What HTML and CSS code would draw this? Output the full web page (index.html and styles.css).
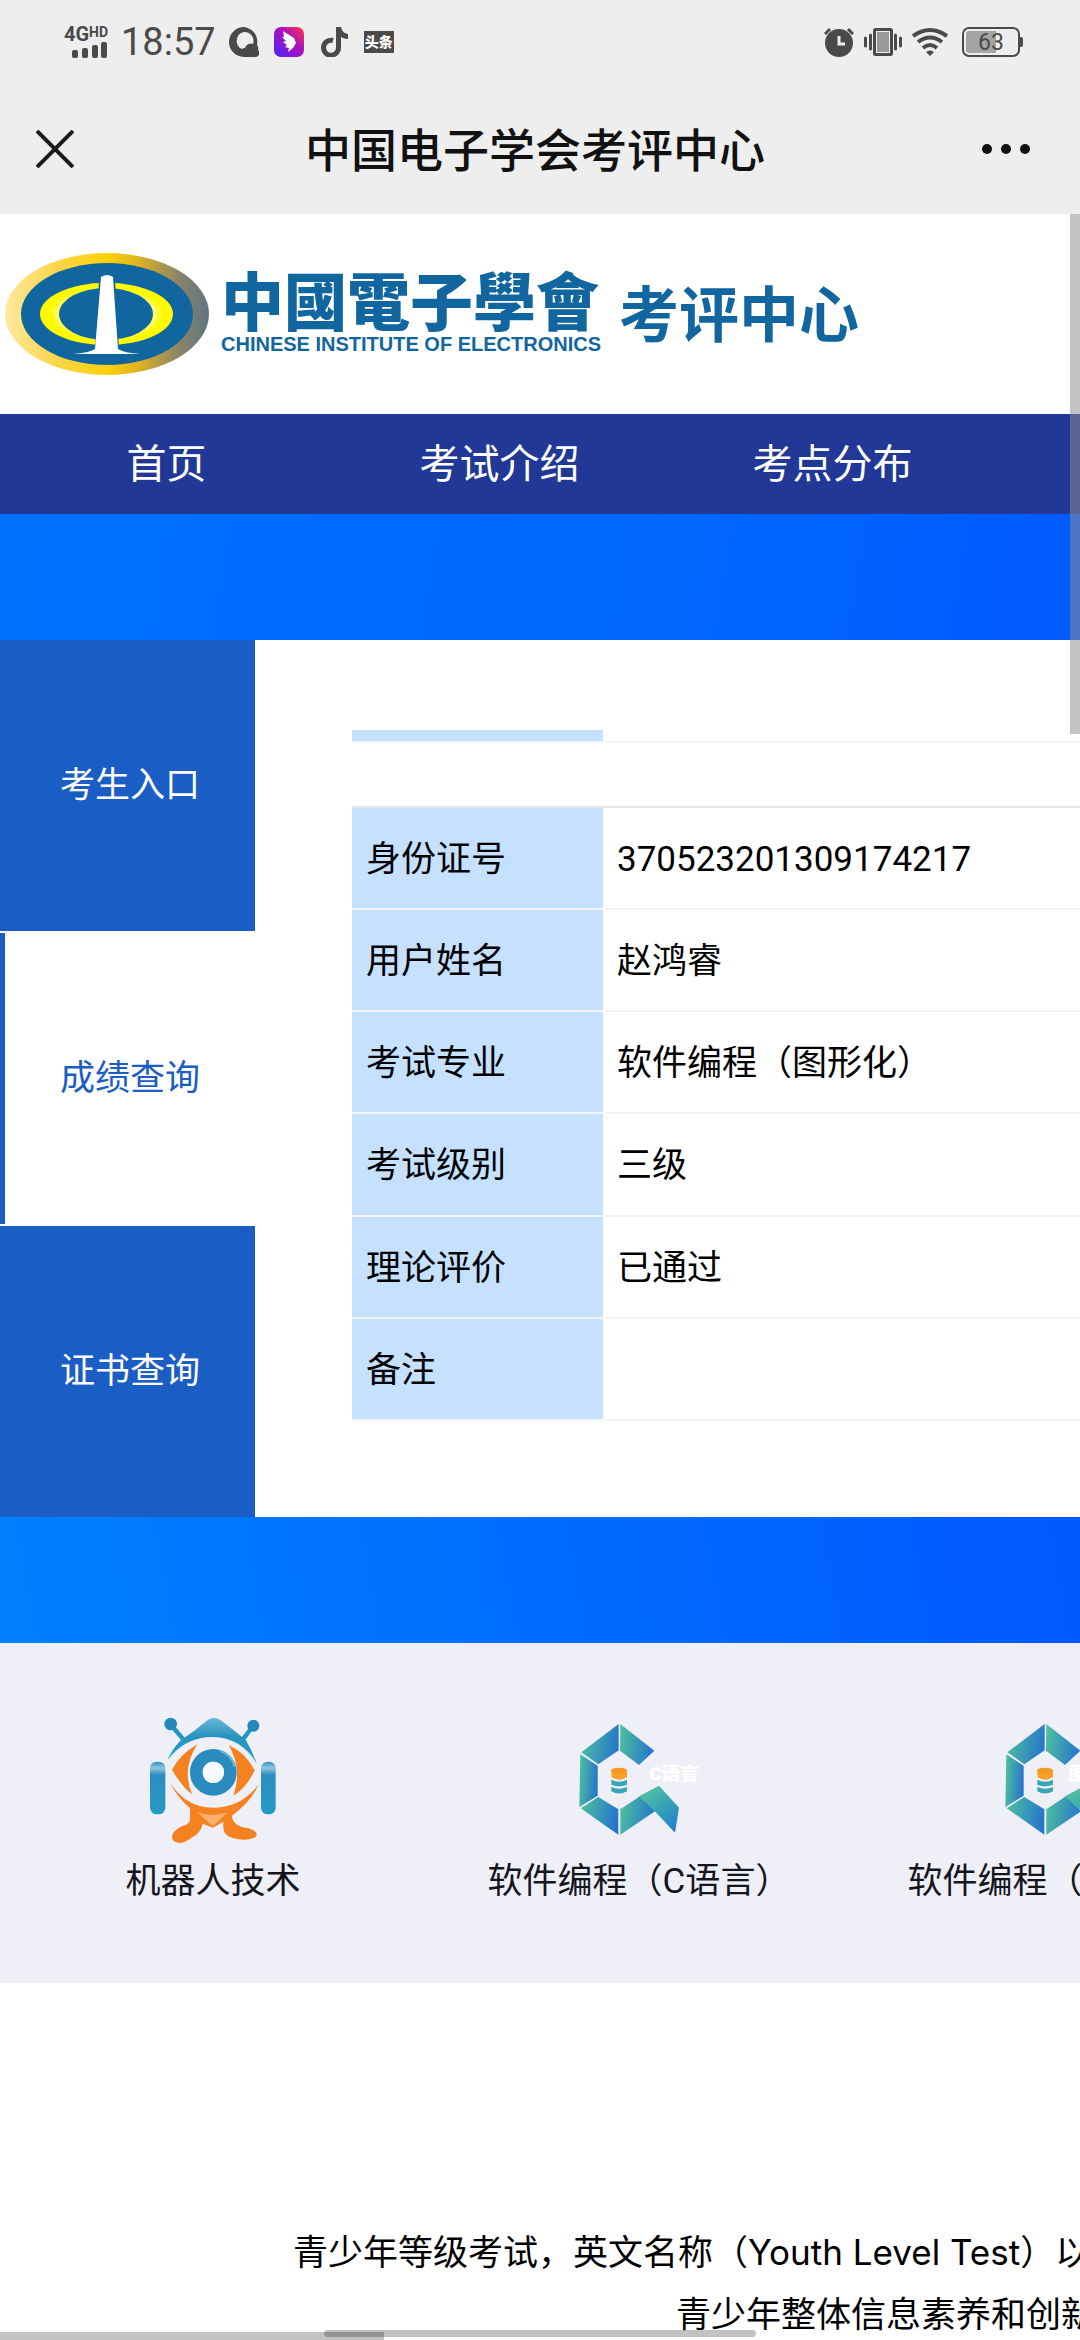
FILE: index.html
```html
<!DOCTYPE html>
<html lang="zh-CN">
<head>
    <meta charset="UTF-8">
    <meta name="viewport" content="width=device-width, initial-scale=1.0">
    <title>中国电子学会考评中心</title>
    <link rel="stylesheet" href="styles.css">
</head>
<body>
    <div class="screen">
        <div class="statusbar">
            <div class="status-left">
                <div class="signal">
                    <span class="net">4G<sup>HD</sup></span>
                    <svg width="36" height="16" viewBox="0 0 36 16" fill="#4a4a4a">
                        <rect x="0" y="8" width="6" height="8" rx="2"/>
                        <rect x="10" y="6" width="6" height="10" rx="2"/>
                        <rect x="20" y="3" width="6" height="13" rx="2"/>
                        <rect x="29" y="0" width="6" height="16" rx="2"/>
                    </svg>
                </div>
                <span class="time">18:57</span>
                <svg class="app" width="30" height="30" viewBox="0 0 30 30">
                    <path fill="#4a4a4a" fill-rule="evenodd" d="M15 0a15 15 0 1 0 0 30h11a4 4 0 0 0 3-7 5 5 0 0 0-1-5A15 15 0 0 0 15 0zM15 5a9 9 0 0 1 9 12 6 6 0 0 0-8 4 5 5 0 0 0-3 1A9 9 0 0 1 15 5z"/>
                </svg>
                <svg class="app" width="30" height="30" viewBox="0 0 30 30">
                    <defs>
                        <linearGradient id="bird" x1="0" y1="1" x2="1" y2="0">
                            <stop offset="0.1" stop-color="#5a22f0"/>
                            <stop offset="0.6" stop-color="#b010b8"/>
                            <stop offset="1" stop-color="#ff3a50"/>
                        </linearGradient>
                    </defs>
                    <rect width="30" height="30" rx="7" fill="url(#bird)"/>
                    <path fill="#fff" d="M9 4l11 7 2 5-3 5-5 4 1-4-4-1 2-2-4-3 3-1-4-4 2 0z"/>
                </svg>
                <svg class="app" width="30" height="30" viewBox="0 0 30 30">
                    <path fill="none" stroke="#4a4a4a" stroke-width="5" d="M14 13.500A7.500 7.500 0 1 0 19.500 21V1"/>
                    <path fill="#4a4a4a" d="M17 0h5q1 6 7 7v5q-5 0-8-3h-4z"/>
                </svg>
                <span class="toutiao">头条</span>
            </div>
            <div class="status-right">
                <svg width="30" height="30" viewBox="0 0 30 30">
                    <circle cx="15" cy="16" r="14" fill="#4a4a4a"/>
                    <path d="M1 7l5-5M29 7l-5-5" stroke="#4a4a4a" stroke-width="3"/>
                    <path d="M15 9v8h6" stroke="#eee" stroke-width="3" fill="none"/>
                </svg>
                <svg width="38" height="30" viewBox="0 0 38 30">
                    <rect x="10.500" y="2.500" width="17" height="25" rx="1" fill="#eee" stroke="#4a4a4a" stroke-width="3"/>
                    <rect x="13" y="5" width="12" height="20" fill="#999"/>
                    <path d="M1.500 11v8M6.500 8v14M31.500 8v14M36.500 11v8" stroke="#4a4a4a" stroke-width="3" stroke-linecap="round"/>
                </svg>
                <svg width="36" height="30" viewBox="0 0 36 30" fill="none" stroke="#4a4a4a" stroke-width="4">
                    <path d="M1 9q17-12 34 0M6 15q12-9 24 0M11 21q7-6 14 0"/>
                    <path d="M18 29l-4-4q4-3 8 0z" fill="#4a4a4a" stroke="none"/>
                </svg>
                <span class="battery">63</span>
            </div>
        </div>

        <div class="titlebar">
            <button class="close" type="button" aria-label="关闭">
                <svg width="38" height="38" viewBox="0 0 38 38">
                    <path d="M1 1l36 36M37 1L1 37" stroke="#1c1c1c" stroke-width="4"/>
                </svg>
            </button>
            <h1>中国电子学会考评中心</h1>
            <button class="more" type="button" aria-label="更多">
                <svg width="48" height="10" viewBox="0 0 48 10" fill="#111">
                    <circle cx="5" cy="5" r="5"/>
                    <circle cx="24" cy="5" r="5"/>
                    <circle cx="43" cy="5" r="5"/>
                </svg>
            </button>
        </div>

        <main class="webview">
            <header class="logo">
                <svg width="210" height="128" viewBox="0 0 210 128">
                    <defs>
                        <linearGradient id="ring">
                            <stop offset="0" stop-color="#ffe9a0"/>
                            <stop offset="0.25" stop-color="#fbd54a"/>
                            <stop offset="0.5" stop-color="#fcd209"/>
                            <stop offset="0.65" stop-color="#dfb420"/>
                            <stop offset="0.85" stop-color="#8a8568"/>
                            <stop offset="1" stop-color="#5f7480"/>
                        </linearGradient>
                        <radialGradient id="moon">
                            <stop offset="0.6" stop-color="#fffde0"/>
                            <stop offset="0.85" stop-color="#fffa00"/>
                        </radialGradient>
                    </defs>
                    <ellipse cx="107" cy="64" rx="102" ry="61" fill="url(#ring)"/>
                    <ellipse cx="107" cy="64" rx="86" ry="51" fill="#1166a0"/>
                    <path fill="url(#moon)" fill-rule="evenodd" d="M40 64a66 31 0 0 1 133 0a66 31 0 0 1-133 0zM59 64a47 26 0 0 0 94 0a47 26 0 0 0-94 0z"/>
                    <path fill="#1166a0" d="M99 30h16l4 70H95z"/>
                    <path fill="#fff" d="M101 27q6-4 12 0l5 72q6 4 22 5H73q16-1 22-5z"/>
                </svg>
                <div class="logo-name">
                    <span class="logo-cn" lang="zh-TW">中國電子學會</span>
                    <span class="logo-en">CHINESE INSTITUTE OF ELECTRONICS</span>
                </div>
                <span class="logo-center">考评中心</span>
            </header>

            <nav class="topnav">
                <a href="#">首页</a>
                <a href="#">考试介绍</a>
                <a href="#">考点分布</a>
            </nav>

            <section class="banner">
                <div class="panel">
                    <nav class="sidenav">
                        <a href="#">考生入口</a>
                        <a href="#" class="active">成绩查询</a>
                        <a href="#">证书查询</a>
                    </nav>
                    <div class="result">
                        <table class="result-prev">
                            <tr><th></th><td></td></tr>
                        </table>
                        <table class="result-table">
                            <tr><th>身份证号</th><td>370523201309174217</td></tr>
                            <tr><th>用户姓名</th><td>赵鸿睿</td></tr>
                            <tr><th>考试专业</th><td>软件编程（图形化）</td></tr>
                            <tr><th>考试级别</th><td>三级</td></tr>
                            <tr><th>理论评价</th><td>已通过</td></tr>
                            <tr><th>备注</th><td></td></tr>
                        </table>
                    </div>
                </div>
            </section>

            <section class="subjects">
                <a href="#" class="subject">
                    <svg width="128" height="128" viewBox="147 112 384 384">
                        <defs>
                            <linearGradient id="head" x1="0" y1="0" x2="0" y2="1">
                                <stop offset="0" stop-color="#6db9d8"/>
                                <stop offset="0.4" stop-color="#2893c0"/>
                                <stop offset="1" stop-color="#22a5c8"/>
                            </linearGradient>
                            <linearGradient id="arm" x1="0" y1="0" x2="0" y2="1">
                                <stop offset="0" stop-color="#2d8fc0"/>
                                <stop offset="0.12" stop-color="#8fc8e0"/>
                                <stop offset="0.25" stop-color="#2d8cc0"/>
                                <stop offset="1" stop-color="#259cc4"/>
                            </linearGradient>
                        </defs>
                        <path d="M211 133l42 50M460 138l-38 50" stroke="#2594bf" stroke-width="13"/>
                        <circle cx="212" cy="133" r="19" fill="#2688b8"/>
                        <circle cx="460" cy="138" r="18" fill="#2688b8"/>
                        <path fill="url(#head)" d="M202 242q15-34 38-58 42-28 82-62 20-15 40 0 38 28 76 60 18 30 32 70-45-78-132-80-84 0-136 70z"/>
                        <rect x="150" y="246" width="46" height="158" rx="20" fill="url(#arm)"/>
                        <rect x="483" y="246" width="44" height="158" rx="20" fill="url(#arm)"/>
                        <path fill="#f58220" d="M208 306q50 78 130 78 86 0 138-70-22 52-80 94 0 30 50 38 26 8 24 20-4 14-40 14-50-4-57-24-6-16-2-30l-33 18-30-12q-4 26-30 40-24 18-40 18-22-2-22-18 2-20 30-32 24-8 24-20v-34q-40-36-62-80z"/>
                        <path fill="#fbb070" d="M292 398q46 16 90 0-22 24-44 42-20-18-46-42z"/>
                        <path fill="#f58220" d="M292 194q-48 74-16 150-30-22-60-74 22-44 76-76zM386 196q52 24 78 76-24 52-64 76 28-80-14-152z"/>
                        <circle cx="340" cy="278" r="51" fill="none" stroke="#2a8bc0" stroke-width="38"/>
                        <path d="M360 214q36 10 44 48" fill="none" stroke="#70b6dc" stroke-width="6"/>
                        <circle cx="340" cy="278" r="32" fill="#f6faff"/>
                    </svg>
                    <span>机器人技术</span>
                </a>
                <a href="#" class="subject">
                    <svg width="128" height="128" viewBox="342 112 384 384">
                        <defs>
                            <linearGradient id="teal" x1="0" y1="0.300" x2="1" y2="0.500">
                                <stop offset="0" stop-color="#4dbf9f"/>
                                <stop offset="1" stop-color="#2674cc"/>
                            </linearGradient>
                            <linearGradient id="tail" x1="0" y1="0" x2="0.800" y2="1">
                                <stop offset="0" stop-color="#5cc79c"/>
                                <stop offset="0.500" stop-color="#39a9b0"/>
                                <stop offset="1" stop-color="#2480cc"/>
                            </linearGradient>
                            <g id="cube">
                                <g fill="url(#teal)">
                                    <path d="M361 218L473 133v79l-61 42z"/>
                                    <path d="M478 133l102 80-46 43-57-43z"/>
                                    <path d="M358 224l52 34v90l-55 34z"/>
                                    <path d="M359 386l53-34 60 37v76z"/>
                                    <path d="M478 389l60-40 44 46-104 70z"/>
                                </g>
                                <path fill="url(#tail)" d="M534 350l60-32 60 66-12 75-62-66z"/>
                                <path fill="#f7a12b" d="M451 274v18q24 16 47 0v-18z"/>
                                <ellipse cx="474" cy="273" rx="24" ry="9" fill="#f5981f"/>
                                <path fill="#39a5b5" d="M451 300q24 12 47 0v15q-24 10-47 0zM451 322q24 10 47 0v13q-24 13-47 0z"/>
                            </g>
                        </defs>
                        <use href="#cube"/>
                        <text class="cube-text" x="565" y="300">C语言</text>
                    </svg>
                    <span>软件编程（C语言）</span>
                </a>
                <a href="#" class="subject">
                    <svg width="128" height="128" viewBox="342 112 384 384">
                        <use href="#cube"/>
                        <text class="cube-text" x="544" y="300">图形化</text>
                    </svg>
                    <span>软件编程（图形化）</span>
                </a>
            </section>

            <section class="intro">
                <p>青少年等级考试，英文名称（Youth Level Test）以</p>
                <p class="second">青少年整体信息素养和创新</p>
            </section>
        </main>

        <div class="scroll-y"></div>
        <div class="scroll-x"></div>
        <div class="home-bar"></div>
    </div>
</body>
</html>
```

FILE: styles.css
```css
* {
    box-sizing: border-box;
}

body {
    margin: 0;
    background-color: #fff;
    color: #000;
    font-family: Roboto, "Noto Sans CJK SC", sans-serif;
    font-size: 35px;
}

a {
    color: inherit;
    text-decoration: none;
}

button {
    border: 0;
    padding: 0;
    background: none;
    line-height: 0;
    cursor: pointer;
}

.screen {
    position: relative;
    height: 100vh;
    overflow: hidden;
}

/* status bar */
.statusbar {
    display: flex;
    justify-content: space-between;
    align-items: center;
    height: 84px;
    padding: 0 60px;
    background-color: #eee;
    color: #4a4a4a;
}

.status-left,
.status-right {
    display: flex;
    align-items: center;
}

.status-left {
    gap: 15px;
}

.status-right {
    gap: 10px;
}

.signal {
    display: flex;
    flex-direction: column;
    align-items: flex-end;
    width: 48px;
}

.net {
    font-size: 20px;
    font-weight: 700;
    line-height: 16px;
}

.net sup {
    font-size: 14px;
    line-height: 0;
    vertical-align: 4px;
}

.time {
    margin: 0 -2px;
    font-size: 38px;
    line-height: 44px;
}

.toutiao {
    width: 30px;
    background-color: #4a4a4a;
    color: #fff;
    font-size: 14px;
    font-weight: 900;
    line-height: 22px;
    text-align: center;
}

.battery {
    position: relative;
    width: 58px;
    height: 30px;
    margin-left: 4px;
    border: 2px solid #4a4a4a;
    border-radius: 7px;
    background: linear-gradient(to right, #a4a4a4 60%, #eee 60%) content-box;
    padding: 2px;
    font-size: 23px;
    line-height: 23px;
    text-align: center;
}

.battery::after {
    content: "";
    position: absolute;
    top: 8px;
    right: -5px;
    width: 3px;
    height: 10px;
    border-radius: 0 2px 2px 0;
    background-color: #4a4a4a;
}

/* title bar */
.titlebar {
    display: grid;
    grid-template-columns: 1fr auto 1fr;
    align-items: center;
    height: 130px;
    padding: 0 50px 0 36px;
    background-color: #eee;
}

.titlebar h1 {
    margin: 0;
    padding: 4px 0 0 4px;
    color: #111;
    font-size: 46px;
    font-weight: 500;
    line-height: 60px;
}

.close {
    justify-self: start;
}

.more {
    justify-self: end;
}

/* logo */
.logo {
    display: flex;
    align-items: center;
    height: 200px;
    color: #1166a0;
}

.logo-name {
    display: flex;
    flex-direction: column;
    gap: 12px;
    margin: 0 18px 0 11px;
}

.logo-cn {
    font-family: "Noto Sans CJK TC", sans-serif;
    font-size: 63px;
    font-weight: 900;
    line-height: 48px;
}

.logo-en {
    font-family: "Liberation Sans", sans-serif;
    font-size: 20px;
    font-weight: 700;
    line-height: 20px;
    white-space: nowrap;
}

.logo-center {
    padding-top: 6px;
    font-size: 60px;
    font-weight: 700;
    line-height: 60px;
}

/* top nav, the fourth tab is off screen */
.topnav {
    display: flex;
    height: 100px;
    background-color: #223896;
    color: #fff;
    font-size: 40px;
    line-height: 102px;
    text-align: center;
}

.topnav a {
    flex: 0 0 333px;
}

/* result panel */
.banner {
    padding: 126px 0;
    background:
        linear-gradient(100deg, #0070ff, #0068ff 60%, #005aff) top / 100% 126px no-repeat,
        linear-gradient(80deg, #0080ff, #006cff 50%, #0058ff) bottom / 100% 126px no-repeat;
}

.panel {
    display: flex;
    background-color: #fff;
}

.sidenav {
    display: flex;
    flex-direction: column;
    gap: 2px;
    width: 255px;
}

.sidenav a {
    border-left: 5px solid #1a5dc4;
    background-color: #1a5dc4;
    color: #fff;
    line-height: 291px;
    text-align: center;
}

.sidenav .active {
    background-color: #fff;
    color: #1a5dc4;
}

.result {
    flex: 1;
    padding: 90px 0 0 97px;
}

table {
    width: 100%;
    border-collapse: collapse;
    table-layout: fixed;
}

tr {
    border-bottom: 2px solid #f3f4f6;
}

th,
td {
    height: 100px;
    padding: 22px 0 0 14px;
    font-weight: 400;
    text-align: left;
    vertical-align: baseline;
}

th {
    width: 251px;
    background-color: #c5e1ff;
}

.result-prev {
    margin-bottom: 63px;
}

.result-prev th,
.result-prev td {
    height: 12px;
    padding: 0;
}

.result-table {
    height: 615px;
    border-top: 2px solid #e4e6e9;
}

/* subjects */
.subjects {
    display: flex;
    padding: 74px 0 76px;
    overflow: hidden;
    background-color: #efeff8;
    color: #15151c;
}

.subject {
    display: flex;
    flex: 0 0 426px;
    flex-direction: column;
    align-items: center;
    gap: 12px;
    line-height: 50px;
    white-space: nowrap;
}

.cube-text {
    fill: #fff;
    font-size: 56px;
    font-weight: 900;
}

/* intro */
.intro {
    padding: 238px 0 0 293px;
    font-family: Inter, "Noto Sans CJK SC", sans-serif;
    line-height: 62px;
    white-space: nowrap;
}

.intro p {
    margin: 0;
}

.intro .second {
    padding-left: 383px;
}

/* scroll bars and home indicator */
.scroll-y {
    position: absolute;
    top: 214px;
    right: 0;
    width: 10px;
    height: 520px;
    background-color: rgba(142, 140, 143, 0.53);
}

.scroll-x {
    position: absolute;
    bottom: 0;
    left: 0;
    width: 384px;
    height: 8px;
    background-color: rgba(0, 0, 0, 0.24);
}

.home-bar {
    position: absolute;
    bottom: 3px;
    left: 30%;
    width: 40%;
    height: 7px;
    border-radius: 4px;
    background-color: rgba(0, 0, 0, 0.24);
}
```
